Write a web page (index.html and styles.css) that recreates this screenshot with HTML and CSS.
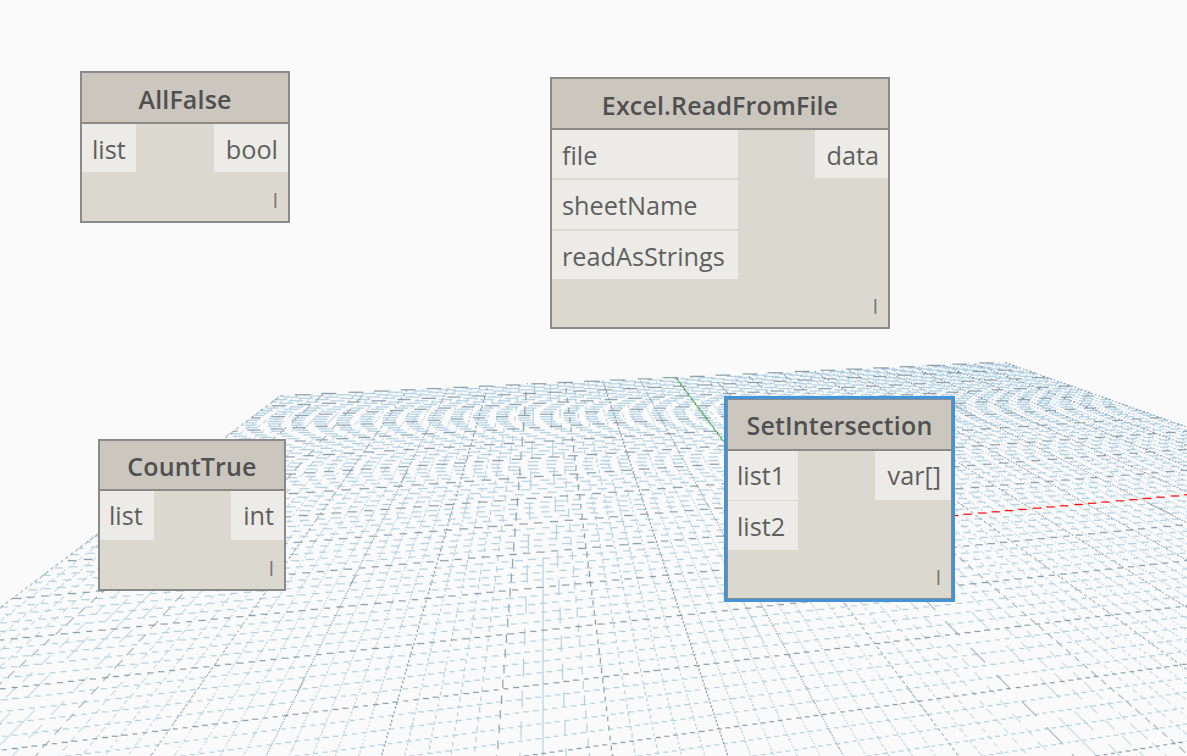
FILE: index.html
```html
<!DOCTYPE html>
<html lang="en">
<head>
<meta charset="utf-8">
<title>Node workspace</title>
<link rel="stylesheet" href="styles.css">
</head>
<body>
<main class="workspace">
  <canvas class="grid" width="1187" height="756"></canvas>

  <section class="node all-false">
    <h2 class="title">AllFalse</h2>
    <div class="ports">
      <ul class="inputs"><li>list</li></ul>
      <ul class="outputs"><li>bool</li></ul>
    </div>
    <footer class="lacing">l</footer>
  </section>

  <section class="node read-file">
    <h2 class="title">Excel.ReadFromFile</h2>
    <div class="ports">
      <ul class="inputs"><li>file</li><li>sheetName</li><li>readAsStrings</li></ul>
      <ul class="outputs"><li>data</li></ul>
    </div>
    <footer class="lacing">l</footer>
  </section>

  <section class="node count-true">
    <h2 class="title">CountTrue</h2>
    <div class="ports">
      <ul class="inputs"><li>list</li></ul>
      <ul class="outputs"><li>int</li></ul>
    </div>
    <footer class="lacing">l</footer>
  </section>

  <section class="node intersection selected">
    <h2 class="title">SetIntersection</h2>
    <div class="ports">
      <ul class="inputs"><li>list1</li><li>list2</li></ul>
      <ul class="outputs"><li>var[]</li></ul>
    </div>
    <footer class="lacing">l</footer>
  </section>
</main>
<script src="grid.js"></script>
</body>
</html>
```
FILE: styles.css
```css
* { box-sizing: border-box; }
body { margin: 0; background: #fafafa; font-family: "Open Sans", "Noto Sans", sans-serif; }
.workspace { position: relative; width: 1187px; height: 756px; overflow: hidden; }
.grid { display: block; }

.node {
  position: absolute;
  display: flex;
  flex-direction: column;
  border: 2px solid #8b8a87;
  background: #dbd8d0;
  color: #5f5f5f;
}
.all-false { left: 80px; top: 71px; width: 210px; height: 152px; }
.read-file { left: 550px; top: 77px; width: 340px; height: 252px; }
.count-true { left: 98px; top: 439px; width: 188px; height: 152px; }
.intersection { left: 724px; top: 396px; width: 231px; height: 206px; }

.title {
  flex: none;
  height: 51px;
  margin: 0;
  border-bottom: 2px solid #8b8a87;
  background: #cbc6be;
  color: #505050;
  font-size: 25px;
  font-weight: 600;
  line-height: 52px;
  letter-spacing: 0.15px;
  text-align: center;
  white-space: nowrap;
}
.count-true .title, .intersection .title { line-height: 51px; }
.count-true .title { height: 50.4px; }
.ports { flex: 1; display: flex; justify-content: space-between; align-items: flex-start; }
ul { list-style: none; margin: 0; padding: 0; display: flex; flex-direction: column; gap: 2px; }
li { height: 48.4px; padding: 0 10px; background: #ecebe7; font-size: 25.25px; line-height: 49.5px; white-space: nowrap; }
.all-false li { line-height: 51px; }
.read-file li { line-height: 50.5px; }
.count-true li { line-height: 49px; }
.all-false .inputs, .count-true .inputs { width: 54px; }
.count-true .inputs li { padding-left: 9px; }
.all-false .outputs { width: 74px; }
.count-true .outputs { width: 53px; }
.read-file .inputs { width: 185.5px; }
.read-file .outputs { width: 73px; }
.read-file .outputs li { padding-right: 9px; }
.intersection li { height: 49px; }
.intersection .inputs { width: 70px; gap: 1px; }
.intersection .inputs li { padding-left: 9px; }
.intersection .inputs li:last-child { line-height: 51px; }
.intersection .outputs { width: 76px; }
.intersection .outputs li { padding-right: 10px; }
.outputs { text-align: right; }
.lacing {
  flex: none;
  height: 42px;
  padding-right: 10px;
  font-size: 20.5px;
  line-height: 43px;
  text-align: right;
  color: #777;
}
.intersection .lacing { padding-right: 11px; line-height: 41px; }

.selected { border: 3px solid #4293d8; box-shadow: inset 0 0 0 1px #8b8a87; }
.selected .title { margin: 1px 1px 0; }
.selected .ports { margin: 0 1px; }
```
FILE: grid.js
```js
// Perspective ground grid, rasterised without antialiasing at a coarser
// resolution so thin lines break into dashes, then scaled to the canvas.
const STEP = 1.22;
const OFFSET_X = -0.51;
const COLS = 975, ROWS = 621;

const origin = [280.5, 395.7];
const vanishI = [4540, 198], scaleI = 0.01023;
const vanishJ = [541.8, 198], scaleJ = -0.05068;

const buffer = document.createElement('canvas');
buffer.width = COLS;
buffer.height = ROWS;
const ctx = buffer.getContext('2d');

function project(i, j) {
  const a = i * scaleI, b = j * scaleJ, w = 1 + a + b;
  return [0, 1].map(n => {
    const v = (origin[n] + vanishI[n] * a + vanishJ[n] * b) / w;
    return (n === 0 ? v - OFFSET_X : v) / STEP;
  });
}

function line(p, q, color, reach = 0.28) {
  ctx.fillStyle = color;
  const steep = Math.abs(q[1] - p[1]) > Math.abs(q[0] - p[0]);
  const m = steep ? 1 : 0, n = 1 - m;
  if (p[m] > q[m]) [p, q] = [q, p];
  const slope = (q[n] - p[n]) / (q[m] - p[m]);
  const end = Math.min(q[m], steep ? ROWS : COLS);
  for (let s = Math.max(0, Math.floor(p[m])); s < end; s++) {
    const t = p[n] + (s + 0.5 - p[m]) * slope;
    const cell = Math.floor(t);
    if (Math.abs(t - cell - 0.5) > reach) continue;
    if (steep) ctx.fillRect(cell, s, 1, 1);
    else ctx.fillRect(s, cell, 1, 1);
  }
}

function lines(major, color) {
  for (let n = 0; n <= 100; n++) {
    if ((n % 5 === 0) !== major) continue;
    const k = n / 5;
    const near = Math.min(20, (1 + k * scaleI) / -scaleJ - 0.05);
    line(project(k, 0), project(k, near), color);
    if (1 + k * scaleJ > 0.01) line(project(0, k), project(20, k), color);
  }
}

lines(false, '#b2d0e2');
lines(true, '#899dab');
line(project(10, 0), project(10, 10), '#2a9a35', 0.5);
line(project(10, 10), project(20, 10), '#ff0000', 0.31);

const view = document.querySelector('.grid').getContext('2d');
view.drawImage(buffer, OFFSET_X, 0, COLS * STEP, ROWS * STEP);
```
